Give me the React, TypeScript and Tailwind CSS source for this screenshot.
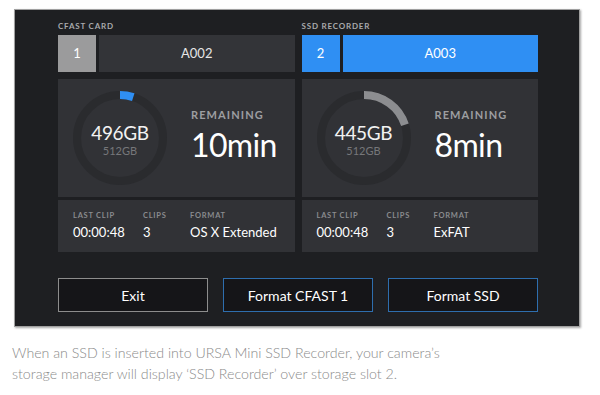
import React from 'react';

interface SlotProps {
  label: string;
  slot: string;
  name: string;
  active: boolean;
  free: string;
  total: string;
  remaining: string;
  used: number; // degrees of arc
  arcColor: string;
  lastClip: string;
  clips: string;
  format: string;
}

const Ring: React.FC<{ used: number; color: string; free: string; total: string }> = ({ used, color, free, total }) => {
  const r = 43;
  const c = 2 * Math.PI * r;
  const len = (used / 360) * c;
  return (
    <div className="relative w-[94px] h-[94px] shrink-0">
      <svg width="94" height="94" viewBox="0 0 94 94" className="absolute inset-0">
        <circle cx="47" cy="47" r={r} fill="none" stroke="#2a2b2e" strokeWidth="8" />
        <circle
          cx="47"
          cy="47"
          r={r}
          fill="none"
          stroke={color}
          strokeWidth="8"
          strokeDasharray={`${len} ${c}`}
          transform="rotate(-90 47 47)"
        />
      </svg>
      <div className="absolute inset-0 flex flex-col items-center justify-center pt-[2px]">
        <span className="text-[19px] leading-[22px] tracking-[-0.02em] text-[#f2f2f2]">{free}</span>
        <span className="text-[11px] leading-[13px] text-[#76777a]">{total}</span>
      </div>
    </div>
  );
};

const SlotColumn: React.FC<SlotProps> = (p) => (
  <div className="flex flex-col">
    <div className="h-[12px] mb-[3px] text-[8px] leading-[12px] font-bold tracking-[0.1em] text-[#a9aaad]">
      {p.label}
    </div>
    <div className="flex gap-[3px] h-[37px]">
      <div
        className={`w-[38px] flex items-center justify-center text-[13px] text-white ${
          p.active ? 'bg-[#2f8ff3]' : 'bg-[#9b9b9c]'
        }`}
      >
        {p.slot}
      </div>
      <div
        className={`flex-1 flex items-center justify-center text-[13px] ${
          p.active ? 'bg-[#2f8ff3] text-white' : 'bg-[#333438] text-[#e6e6e6]'
        }`}
      >
        {p.name}
      </div>
    </div>
    <div className="mt-[7px] h-[118px] bg-[#313236] flex items-center pl-[15px]">
      <Ring used={p.used} color={p.arcColor} free={p.free} total={p.total} />
      <div className="ml-[24px] flex flex-col pb-[4px]">
        <span className="text-[11px] leading-[14px] font-bold tracking-[0.1em] text-[#9d9ea1]">REMAINING</span>
        <span className="mt-[4px] text-[32px] leading-[38px] tracking-[-0.02em] text-white">{p.remaining}</span>
      </div>
    </div>
    <div className="mt-[3px] h-[52px] bg-[#313236] flex items-center pl-[15px] pb-[2px]">
      <div className="w-[70px] flex flex-col">
        <span className="text-[7.5px] leading-[10px] font-bold tracking-[0.1em] text-[#8a8b8e]">LAST CLIP</span>
        <span className="mt-[3px] text-[13px] leading-[16px] text-white">{p.lastClip}</span>
      </div>
      <div className="w-[47px] flex flex-col">
        <span className="text-[7.5px] leading-[10px] font-bold tracking-[0.1em] text-[#8a8b8e]">CLIPS</span>
        <span className="mt-[3px] text-[13px] leading-[16px] text-white">{p.clips}</span>
      </div>
      <div className="flex flex-col">
        <span className="text-[7.5px] leading-[10px] font-bold tracking-[0.1em] text-[#8a8b8e]">FORMAT</span>
        <span className="mt-[3px] text-[13px] leading-[16px] text-white">{p.format}</span>
      </div>
    </div>
  </div>
);

export default function App() {
  return (
    <div className="w-[600px] h-[395px] bg-white overflow-hidden font-['Lato','Noto_Sans',sans-serif]">
      <div className="ml-[14px] mt-[9px] w-[566px] h-[318px] bg-[#1e1f22] border border-[#a0a0a0] shadow-[1px_1px_2px_rgba(0,0,0,0.35)] pl-[43px] pr-[41px] pt-[10px]">
        <div className="grid grid-cols-2 gap-[7px]">
          <SlotColumn
            label="CFAST CARD"
            slot="1"
            name="A002"
            active={false}
            free="496GB"
            total="512GB"
            remaining="10min"
            used={18}
            arcColor="#2f8ff3"
            lastClip="00:00:48"
            clips="3"
            format="OS X Extended"
          />
          <SlotColumn
            label="SSD RECORDER"
            slot="2"
            name="A003"
            active={true}
            free="445GB"
            total="512GB"
            remaining="8min"
            used={72}
            arcColor="#8c8d90"
            lastClip="00:00:48"
            clips="3"
            format="ExFAT"
          />
        </div>
        <div className="mt-[26px] grid grid-cols-3 gap-[15px]">
          <button className="h-[34px] bg-[#151518] border border-[#8d8d8d] text-[14px] text-white">Exit</button>
          <button className="h-[34px] bg-[#151518] border border-[#2e6eae] text-[14px] text-white">Format CFAST 1</button>
          <button className="h-[34px] bg-[#151518] border border-[#2e6eae] text-[14px] text-white">Format SSD</button>
        </div>
      </div>
      <p className="ml-[12px] mt-[15px] w-[440px] text-[14.2px] leading-[21px] font-light text-[#8a8a8a]">
        When an SSD is inserted into URSA Mini SSD Recorder, your camera’s storage manager will display ‘SSD
        Recorder’ over storage slot 2.
      </p>
    </div>
  );
}
